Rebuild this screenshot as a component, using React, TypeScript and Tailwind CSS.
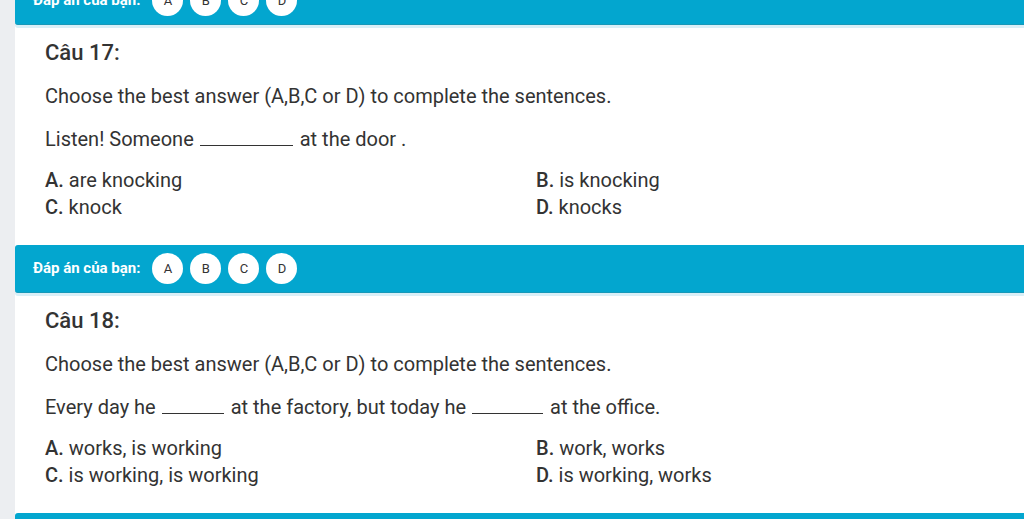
import React from "react";

interface Option {
  key: string;
  text: string;
}

interface Question {
  num: number;
  sentence: React.ReactNode;
  options: Option[];
}

const Blank = ({ w }: { w: string }) => (
  <span className={`inline-block ${w} border-b border-[#333] h-[16px] align-baseline mr-[7px] ml-[1px]`} />
);

const questions: Question[] = [
  {
    num: 17,
    sentence: (
      <>
        Listen! Someone <Blank w="w-[93px]" />at the door .
      </>
    ),
    options: [
      { key: "A", text: "are knocking" },
      { key: "B", text: "is knocking" },
      { key: "C", text: "knock" },
      { key: "D", text: "knocks" },
    ],
  },
  {
    num: 18,
    sentence: (
      <>
        Every day he <Blank w="w-[62px]" />at the factory, but today he <Blank w="w-[71px]" />at the office.
      </>
    ),
    options: [
      { key: "A", text: "works, is working" },
      { key: "B", text: "work, works" },
      { key: "C", text: "is working, is working" },
      { key: "D", text: "is working, works" },
    ],
  },
];

const AnswerBar = () => (
  <div className="h-[48px] bg-[#03a6cf] border-b border-[#1798b8] rounded-[3px] flex items-center pl-[18px] gap-[12px] shadow-[0_3px_0_#d9eff7]">
    <span className="text-white font-bold text-[15px]">Đáp án của bạn:</span>
    <div className="flex gap-[7px]">
      {["A", "B", "C", "D"].map((l) => (
        <div
          key={l}
          className="w-[31px] h-[31px] rounded-full bg-white flex items-center justify-center text-[13px] text-[#333]"
        >
          {l}
        </div>
      ))}
    </div>
  </div>
);

const QuestionBody = ({ q }: { q: Question }) => (
  <div className="h-[220px] pl-[30px] pt-[13px] text-[#333]">
    <h2 className="text-[22px] font-medium leading-[30px]">Câu {q.num}:</h2>
    <p className="text-[20px] leading-[26px] mt-[15px]">
      Choose the best answer (A,B,C or D) to complete the sentences.
    </p>
    <p className="text-[20px] leading-[26px] mt-[17px]">{q.sentence}</p>
    <div className="grid grid-cols-[491px_1fr] text-[20px] leading-[27px] mt-[15px]">
      {q.options.map((o) => (
        <div key={o.key}>
          <span className="font-medium">{o.key}.</span> {o.text}
        </div>
      ))}
    </div>
  </div>
);

export default function App() {
  return (
    <div
      className="w-[1024px] h-[519px] overflow-hidden bg-[#eceef1] pl-[15px]"
      style={{ fontFamily: "Roboto, 'Liberation Sans', sans-serif" }}
    >
      <div className="w-[1060px] bg-white -mt-[23px]">
        <AnswerBar />
        <QuestionBody q={questions[0]} />
        <AnswerBar />
        <QuestionBody q={questions[1]} />
        <AnswerBar />
      </div>
    </div>
  );
}
